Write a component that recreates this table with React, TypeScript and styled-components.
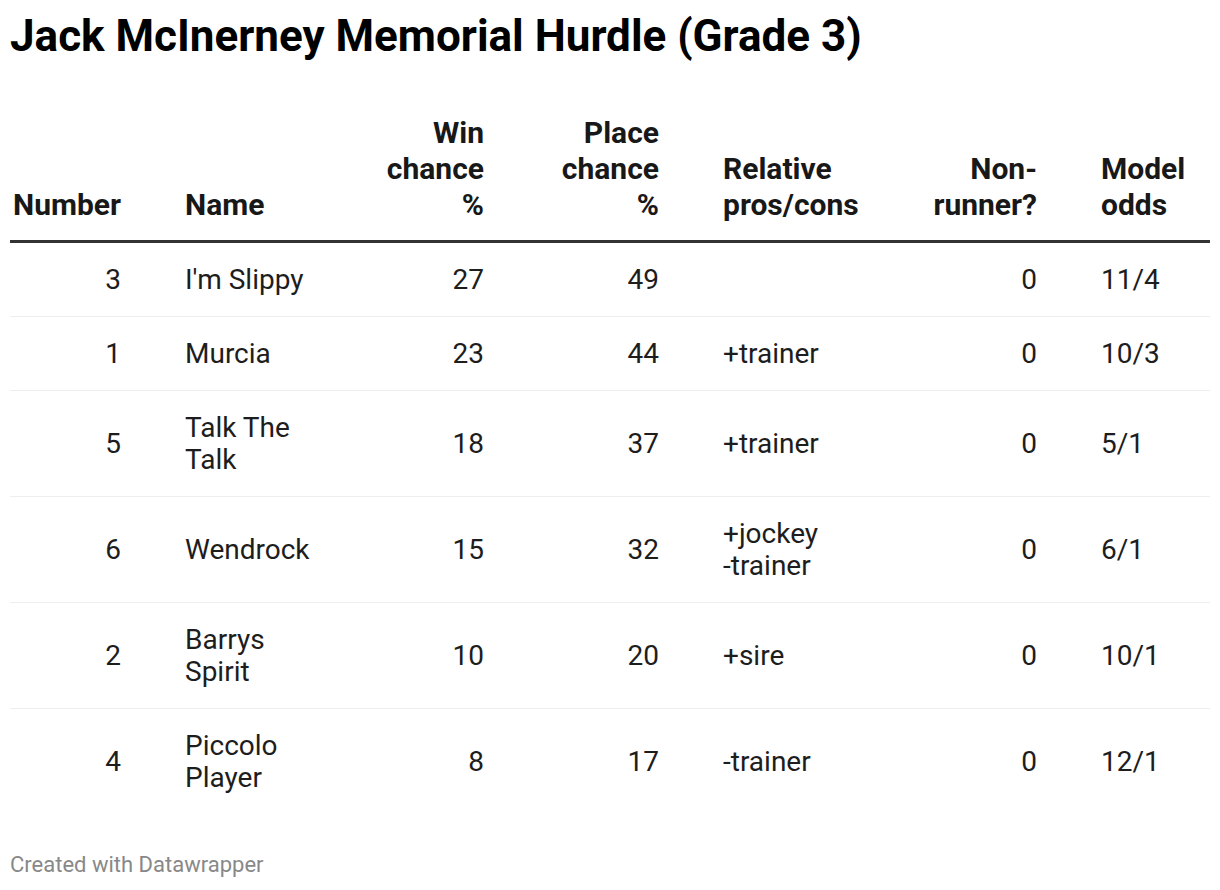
import styled, { createGlobalStyle } from "styled-components";

type Runner = {
  number: number;
  name: string;
  win: number;
  place: number;
  pros: string[];
  nonRunner: number;
  odds: string;
};

const runners: Runner[] = [
  { number: 3, name: "I'm Slippy", win: 27, place: 49, pros: [], nonRunner: 0, odds: "11/4" },
  { number: 1, name: "Murcia", win: 23, place: 44, pros: ["+trainer"], nonRunner: 0, odds: "10/3" },
  { number: 5, name: "Talk The Talk", win: 18, place: 37, pros: ["+trainer"], nonRunner: 0, odds: "5/1" },
  { number: 6, name: "Wendrock", win: 15, place: 32, pros: ["+jockey", "-trainer"], nonRunner: 0, odds: "6/1" },
  { number: 2, name: "Barrys Spirit", win: 10, place: 20, pros: ["+sire"], nonRunner: 0, odds: "10/1" },
  { number: 4, name: "Piccolo Player", win: 8, place: 17, pros: ["-trainer"], nonRunner: 0, odds: "12/1" },
];

const columns = [
  { label: "Number", width: 143, align: "right" },
  { label: "Name", width: 192, align: "left" },
  { label: "Win chance %", width: 171, align: "right" },
  { label: "Place chance %", width: 175, align: "right" },
  { label: "Relative pros/cons", width: 205, align: "left" },
  { label: "Non-runner?", width: 173, align: "right" },
  { label: "Model odds", width: 141, align: "left" },
] as const;

const App = () => {
  return (
    <>
      <GlobalStyle />
      <Page>
        <Title>Jack McInerney Memorial Hurdle (Grade 3)</Title>
        <Table>
          <colgroup>
            {columns.map((c) => (
              <col key={c.label} style={{ width: c.width }} />
            ))}
          </colgroup>
          <thead>
            <tr>
              {columns.map((c) => (
                <HeadCell key={c.label} $align={c.align}>
                  {c.label}
                </HeadCell>
              ))}
            </tr>
          </thead>
          <tbody>
            {runners.map((r, i) => (
              <Row key={r.number} $last={i === runners.length - 1}>
                <Cell $align="right">{r.number}</Cell>
                <Cell $align="left">{r.name}</Cell>
                <Cell $align="right">{r.win}</Cell>
                <Cell $align="right">{r.place}</Cell>
                <Cell $align="left">
                  {r.pros.map((p) => (
                    <div key={p}>{p}</div>
                  ))}
                </Cell>
                <Cell $align="right">{r.nonRunner}</Cell>
                <Cell $align="left">{r.odds}</Cell>
              </Row>
            ))}
          </tbody>
        </Table>
        <Footer>Created with Datawrapper</Footer>
      </Page>
    </>
  );
};

const GlobalStyle = createGlobalStyle`
  html, body {
    margin: 0;
    padding: 0;
    background: #ffffff;
  }
  body {
    font-family: Roboto, "Liberation Sans", sans-serif;
    color: #1d1d1d;
  }
`;

const Page = styled.div`
  width: 1200px;
  padding: 10px 10px 0 10px;
`;

const Title = styled.h1`
  margin: 0;
  font-size: 44px;
  line-height: 52px;
  font-weight: 700;
  color: #000;
`;

const Table = styled.table`
  margin-top: 53px;
  width: 1200px;
  table-layout: fixed;
  border-collapse: collapse;
  border-spacing: 0;
`;

const cellPadding = `
  padding-left: 32px;
  padding-right: 32px;
  &:first-child { padding-left: 0; }
  &:last-child { padding-right: 0; }
`;

const HeadCell = styled.th<{ $align: string }>`
  ${cellPadding}
  text-align: ${(p) => p.$align};
  vertical-align: bottom;
  font-size: 30px;
  line-height: 36px;
  font-weight: 700;
  color: #181818;
  padding-top: 0;
  padding-bottom: 17px;
  border-bottom: 3px solid #333333;
`;

const Row = styled.tr<{ $last: boolean }>`
  border-bottom: ${(p) => (p.$last ? "none" : "1px solid #eeeeee")};
`;

const Cell = styled.td<{ $align: string }>`
  ${cellPadding}
  text-align: ${(p) => p.$align};
  vertical-align: middle;
  font-size: 28px;
  line-height: 32px;
  padding-top: 21px;
  padding-bottom: 20px;
  color: #1d1d1d;
`;

const Footer = styled.div`
  margin-top: 37px;
  font-size: 22px;
  line-height: 28px;
  color: #888888;
`;

export default App;
